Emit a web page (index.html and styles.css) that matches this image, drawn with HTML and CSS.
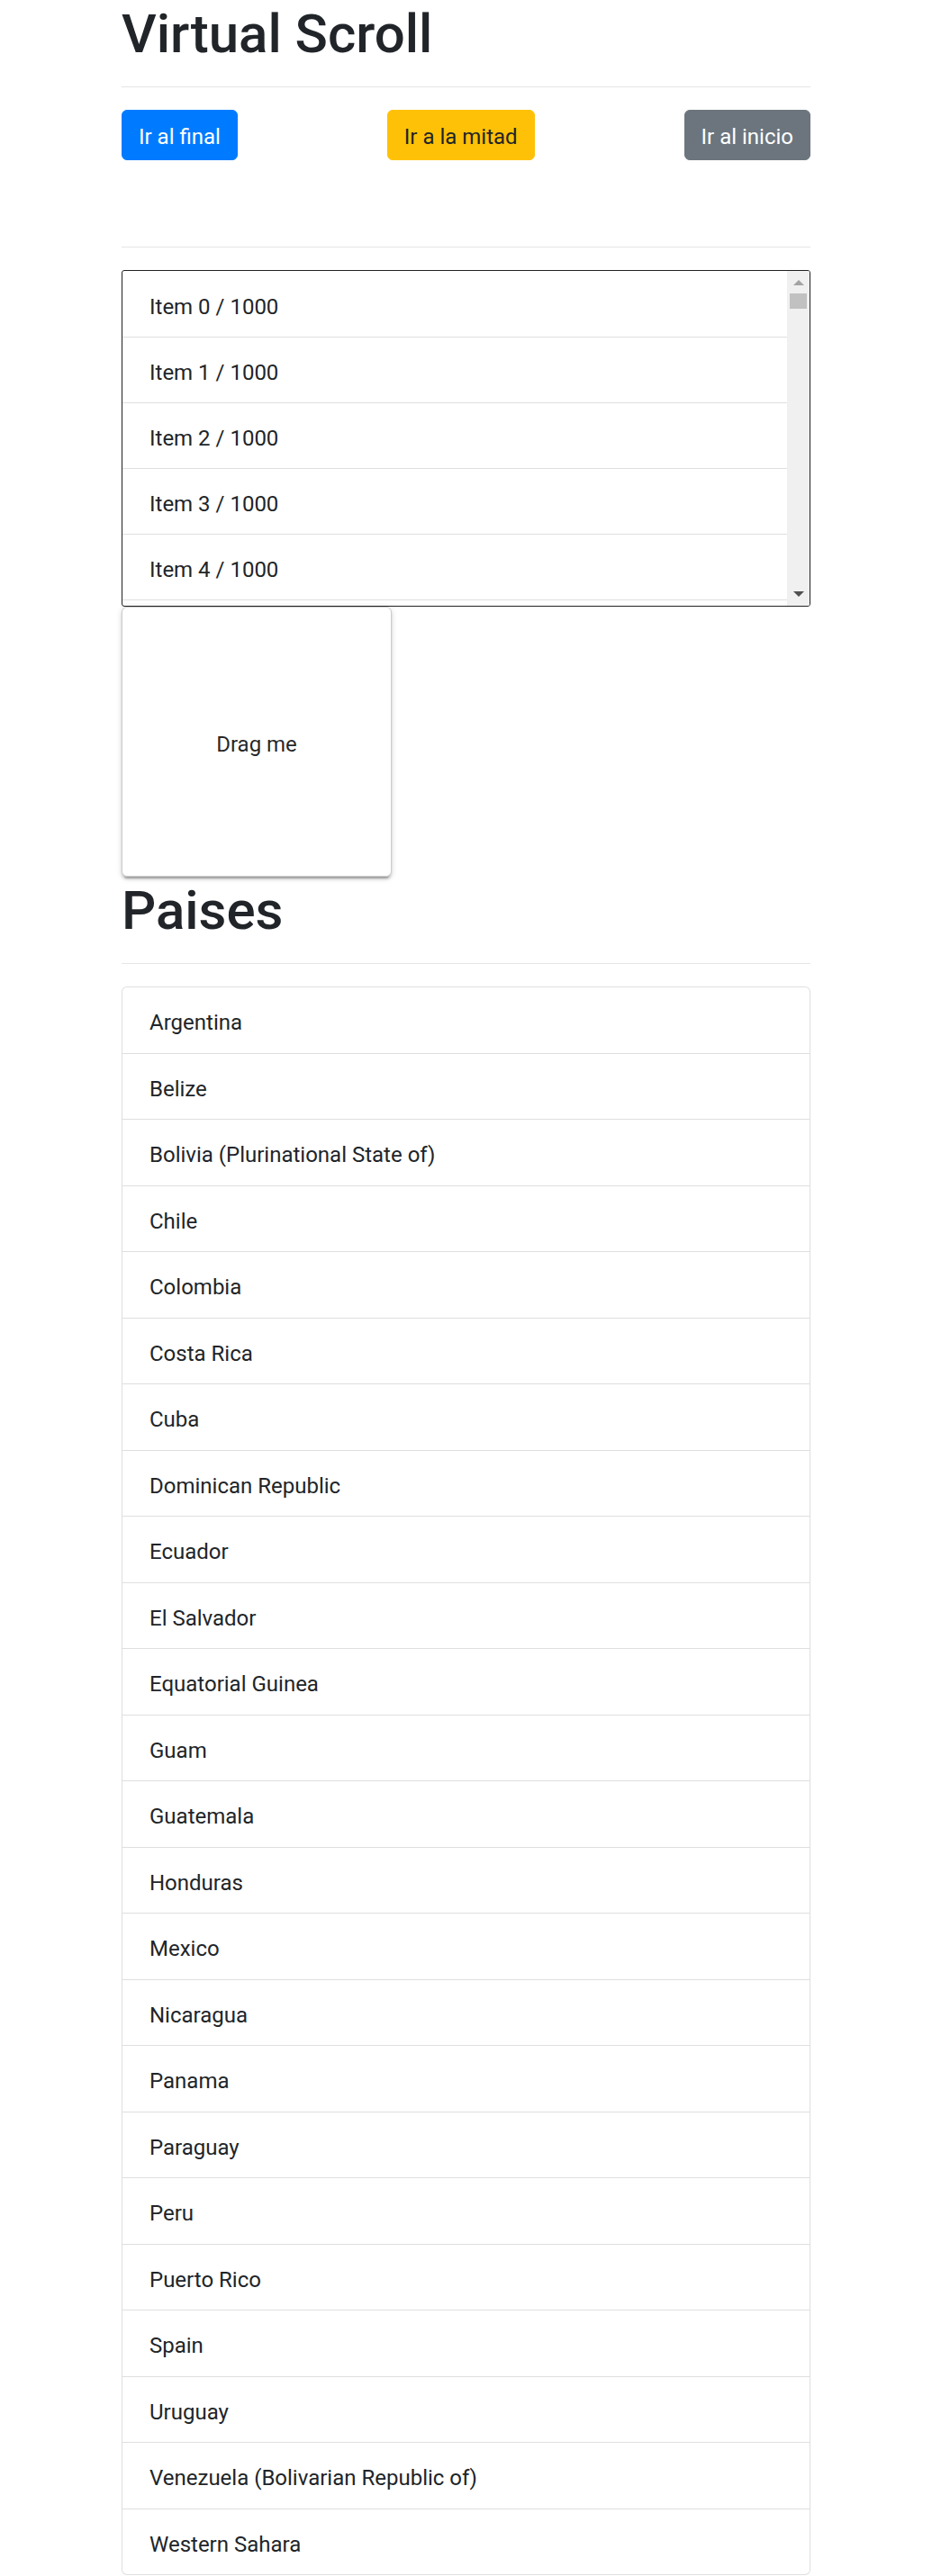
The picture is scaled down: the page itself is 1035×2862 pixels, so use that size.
FILE: index.html
```html
<!DOCTYPE html>
<html lang="es">
<head>
<meta charset="utf-8">
<title>Virtual Scroll</title>
<link rel="stylesheet" href="styles.css">
</head>
<body>
<div class="container">
  <h1 class="title">Virtual Scroll</h1>
  <hr class="rule">
  <div class="actions">
    <button class="btn btn-primary">Ir al final</button>
    <button class="btn btn-warning">Ir a la mitad</button>
    <button class="btn btn-secondary">Ir al inicio</button>
  </div>
  <hr class="rule">
  <div class="viewport">
    <ul class="vlist">
      <li class="vitem">Item 0 / 1000</li>
      <li class="vitem">Item 1 / 1000</li>
      <li class="vitem">Item 2 / 1000</li>
      <li class="vitem">Item 3 / 1000</li>
      <li class="vitem">Item 4 / 1000</li>
    </ul>
    <div class="scrollbar">
      <span class="arrow arrow-up"></span>
      <span class="track"><span class="thumb"></span></span>
      <span class="arrow arrow-down"></span>
    </div>
  </div>
  <div class="drag-box">Drag me</div>
  <h1 class="title">Paises</h1>
  <hr class="rule">
  <ul class="list-group">
    <li class="list-item">Argentina</li>
    <li class="list-item">Belize</li>
    <li class="list-item">Bolivia (Plurinational State of)</li>
    <li class="list-item">Chile</li>
    <li class="list-item">Colombia</li>
    <li class="list-item">Costa Rica</li>
    <li class="list-item">Cuba</li>
    <li class="list-item">Dominican Republic</li>
    <li class="list-item">Ecuador</li>
    <li class="list-item">El Salvador</li>
    <li class="list-item">Equatorial Guinea</li>
    <li class="list-item">Guam</li>
    <li class="list-item">Guatemala</li>
    <li class="list-item">Honduras</li>
    <li class="list-item">Mexico</li>
    <li class="list-item">Nicaragua</li>
    <li class="list-item">Panama</li>
    <li class="list-item">Paraguay</li>
    <li class="list-item">Peru</li>
    <li class="list-item">Puerto Rico</li>
    <li class="list-item">Spain</li>
    <li class="list-item">Uruguay</li>
    <li class="list-item">Venezuela (Bolivarian Republic of)</li>
    <li class="list-item">Western Sahara</li>
  </ul>
</div>
</body>
</html>
```

FILE: styles.css
```css
* { box-sizing: border-box; }

html, body {
  margin: 0;
  padding: 0;
  background: #fff;
}

body {
  font-family: Roboto, "Noto Sans", "Liberation Sans", sans-serif;
  font-size: 24px;
  line-height: 36px;
  color: #212529;
}

.container {
  width: 810px;
  margin: 0 auto;
  padding: 0 22.5px;
}

.title {
  margin: 0;
  padding-top: 4px;
  font-size: 60px;
  line-height: 68px;
  font-weight: 500;
  color: #212529;
}

.rule {
  margin: 24px 0 25px;
  border: 0;
  border-top: 1px solid rgba(0, 0, 0, 0.1);
  height: 0;
}

.actions {
  display: flex;
  justify-content: space-between;
  margin-bottom: 96px;
}

.btn {
  font-family: inherit;
  font-size: 24px;
  line-height: 36px;
  padding: 11px 18px 7px;
  border: 1.5px solid transparent;
  border-radius: 6px;
  cursor: pointer;
}

.btn-primary { background: #007bff; border-color: #007bff; color: #fff; }
.btn-warning { background: #ffc107; border-color: #ffc107; color: #212529; }
.btn-secondary { background: #6c757d; border-color: #6c757d; color: #fff; }

.viewport {
  height: 374px;
  border: 1px solid #222;
  border-radius: 3px;
  display: flex;
  overflow: hidden;
}

.vlist {
  flex: 1;
  margin: 0;
  padding: 0;
  list-style: none;
  overflow: hidden;
}

.vitem {
  padding: 21px 30px 15px;
  line-height: 36px;
  border-bottom: 1px solid rgba(0, 0, 0, 0.125);
}

.vitem:first-child {
  padding-top: 22px;
}

.scrollbar {
  width: 25px;
  flex: none;
  background: #f0f0f0;
  display: flex;
  flex-direction: column;
  align-items: center;
}

.arrow {
  width: 0;
  height: 0;
  border-left: 6px solid transparent;
  border-right: 6px solid transparent;
}

.arrow-up {
  margin-top: 10px;
  border-bottom: 6px solid #a3a3a3;
}

.arrow-down {
  margin-bottom: 10px;
  border-top: 6px solid #505050;
}

.track {
  flex: 1;
  width: 100%;
  padding: 9px 3px 0;
}

.thumb {
  display: block;
  height: 17px;
  background: #c1c1c1;
}

.drag-box {
  width: 300px;
  height: 300px;
  padding-top: 5px;
  border: 1px solid #ccc;
  border-radius: 6px;
  background: #fff;
  color: rgba(0, 0, 0, 0.87);
  display: flex;
  align-items: center;
  justify-content: center;
  box-shadow: 0 4.5px 1.5px -3px rgba(0, 0, 0, 0.2),
              0 3px 3px 0 rgba(0, 0, 0, 0.14),
              0 1.5px 7.5px 0 rgba(0, 0, 0, 0.12);
}

.list-group {
  margin: 0;
  padding: 0;
  list-style: none;
}

.list-item {
  padding: 21px 30px 15.5px;
  line-height: 36px;
  border: 1px solid rgba(0, 0, 0, 0.125);
  margin-bottom: -1px;
  background: #fff;
}

.list-item:first-child {
  border-top-left-radius: 6px;
  border-top-right-radius: 6px;
}

.list-item:last-child {
  margin-bottom: 0;
  border-bottom-left-radius: 6px;
  border-bottom-right-radius: 6px;
}
```
